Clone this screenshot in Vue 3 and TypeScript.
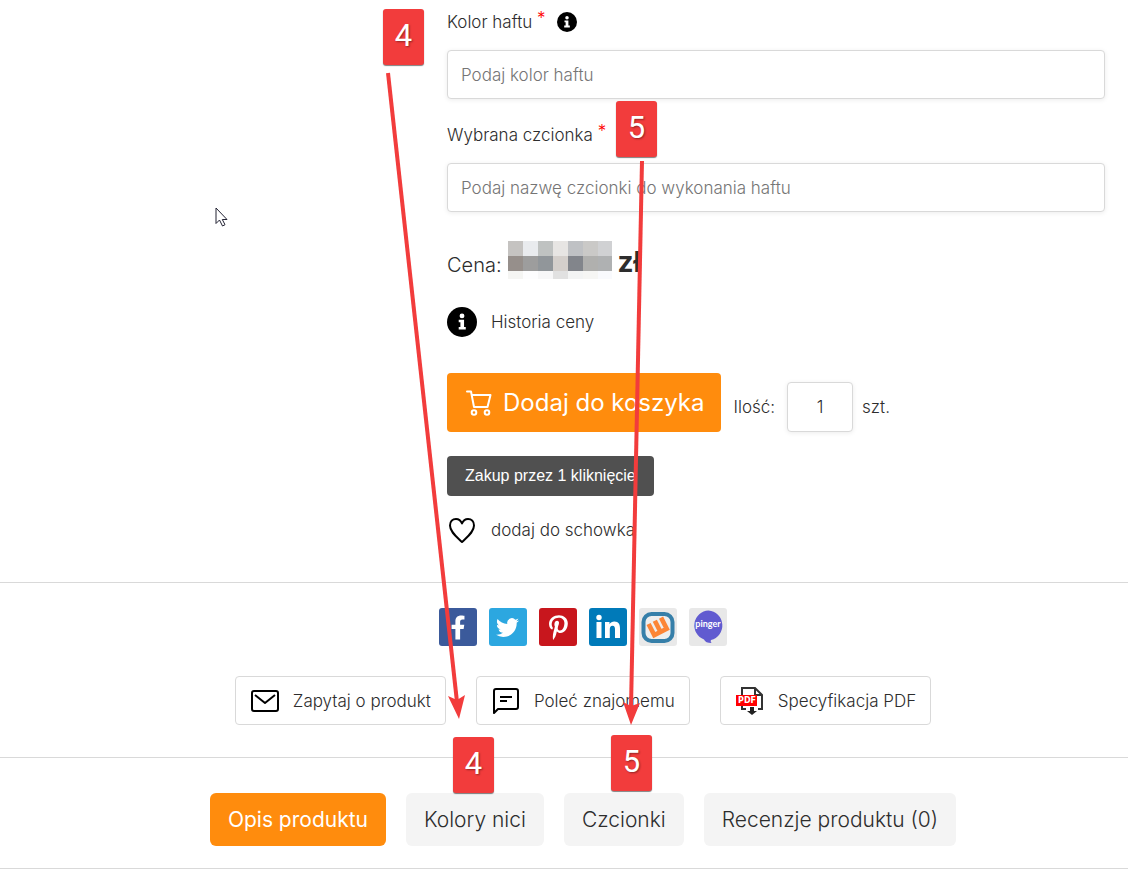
<script setup lang="ts">
import { ref } from 'vue'

const threadColor = ref('')
const fontName = ref('')
const quantity = ref('1')
const activeTab = ref(0)
const tabs: string[] = ['Opis produktu', 'Kolory nici', 'Czcionki', 'Recenzje produktu (0)']

const priceBlocks: string[] = [
  '#c5c3c1', '#e9ebee', '#bfc2c1', '#e7e5e3', '#bfc1c4', '#cac9c7', '#d0d1d3',
  '#968f8b', '#9d9d9d', '#91969a', '#d4cfcb', '#82858b', '#b0b0ae', '#afb1b2',
  '#f5f5f3', '#fdfdfe', '#f7f7f8', '#e1e1e1', '#f3f4f4', '#f6f6f4', '#f9fafd',
]
</script>

<template>
  <main class="page">
    <section class="product">
      <form class="form" @submit.prevent>
        <div class="field">
          <div class="label-row">
            <label for="thread">Kolor haftu <span class="req">*</span></label>
            <svg class="info-small" viewBox="0 0 32 32" aria-hidden="true">
              <circle cx="16" cy="16" r="16" fill="#000" />
              <circle cx="16" cy="9" r="2.8" fill="#fff" />
              <path d="M12 13.5h6.2v8.2h2.3v3h-9v-3h2.300v-5.200H12z" fill="#fff" />
            </svg>
          </div>
          <input id="thread" v-model="threadColor" class="text-input" type="text" placeholder="Podaj kolor haftu" />
        </div>
        <div class="field">
          <div class="label-row">
            <label for="font">Wybrana czcionka <span class="req">*</span></label>
          </div>
          <input id="font" v-model="fontName" class="text-input" type="text" placeholder="Podaj nazwę czcionki do wykonania haftu" />
        </div>

        <div class="price">
          <span>Cena:</span>
          <span class="mosaic">
            <i v-for="(c, i) in priceBlocks" :key="i" :style="{ background: c }"></i>
          </span>
          <strong>zł</strong>
        </div>

        <a class="link-row history" href="#history">
          <svg class="info-big" viewBox="0 0 32 32" aria-hidden="true">
            <circle cx="16" cy="16" r="16" fill="#000" />
            <circle cx="16" cy="9.5" r="2.6" fill="#fff" />
            <path d="M12.500 13.500h5.700v7.700H20v2.800h-7.500v-2.800h1.800v-4.900h-1.800z" fill="#fff" />
          </svg>
          <span>Historia ceny</span>
        </a>

        <div class="buy-row">
          <button class="buy" type="submit">
            <svg viewBox="0 0 26 26" fill="none" stroke="#fff" stroke-width="2" stroke-linejoin="round" stroke-linecap="round" aria-hidden="true">
              <path d="M1 1.500h4l3 15.500h13.500l3-12H6" />
              <circle cx="8" cy="22.500" r="2.300" />
              <circle cx="21" cy="22.500" r="2.300" />
            </svg>
            <span>Dodaj do koszyka</span>
          </button>
          <label for="qty">Ilość:</label>
          <input id="qty" v-model="quantity" class="qty" type="text" />
          <span>szt.</span>
        </div>

        <button class="one-click" type="button">Zakup przez 1 kliknięcie</button>

        <a class="link-row wish" href="#wishlist">
          <svg class="heart" viewBox="0 0 30 30" fill="none" stroke="#000" stroke-width="2" stroke-linejoin="round" aria-hidden="true">
            <path d="M15 27C10 22 3 17 3 10.500C3 6.500 5.500 4 9 4c3 0 5 2 6 4.500C16 6 18 4 21 4c3.500 0 6 2.500 6 6.500C27 17 20 22 15 27z" />
          </svg>
          <span>dodaj do schowka</span>
        </a>
      </form>
    </section>

    <section class="share">
      <div class="socials">
        <a href="#facebook" aria-label="Facebook">
          <svg viewBox="0 0 38 38"><rect width="38" height="38" rx="3" fill="#3b5a9b" />
            <path transform="translate(11.500 7.500) scale(.047)" fill="#fff" d="M279.140 288l14.220-92.660h-88.910v-60.130c0-25.350 12.420-50.060 52.240-50.060h40.420V6.260S260.430 0 225.360 0c-73.220 0-121.080 44.380-121.080 124.720v70.620H22.890V288h81.390v224h100.170V288z" />
          </svg>
        </a>
        <a href="#twitter" aria-label="Twitter">
          <svg viewBox="0 0 38 38"><rect width="38" height="38" rx="3" fill="#2ca7e0" />
            <path transform="translate(7 8) scale(.96)" fill="#fff" d="M23.953 4.570a10 10 0 01-2.825.775 4.958 4.958 0 002.163-2.723c-.951.555-2.005.959-3.127 1.184a4.920 4.920 0 00-8.384 4.482C7.690 8.095 4.067 6.130 1.640 3.162a4.822 4.822 0 00-.666 2.475c0 1.710.870 3.213 2.188 4.096a4.904 4.904 0 01-2.228-.616v.060a4.923 4.923 0 003.946 4.827 4.996 4.996 0 01-2.212.085 4.936 4.936 0 004.604 3.417 9.867 9.867 0 01-6.102 2.105c-.390 0-.779-.023-1.170-.067a13.995 13.995 0 007.557 2.209c9.053 0 13.998-7.496 13.998-13.985 0-.210 0-.420-.015-.630A9.935 9.935 0 0024 4.590z" />
          </svg>
        </a>
        <a href="#pinterest" aria-label="Pinterest">
          <svg viewBox="0 0 38 38"><rect width="38" height="38" rx="3" fill="#c8161d" />
            <path transform="translate(10 7) scale(.049)" fill="#fff" d="M204 6.500C101.400 6.500 0 74.900 0 185.600 0 256 39.600 296 63.600 296c9.900 0 15.600-27.600 15.600-35.400 0-9.300-23.700-29.100-23.700-67.800 0-80.400 61.200-137.400 140.400-137.400 68.100 0 118.500 38.700 118.500 109.800 0 53.100-21.300 152.700-90.300 152.700-24.900 0-46.200-18-46.200-43.800 0-37.800 26.400-74.400 26.400-113.400 0-66.200-93.900-54.200-93.900 25.800 0 16.800 2.100 35.400 9.600 50.700-13.800 59.400-42 147.900-42 209.100 0 18.900 2.700 37.500 4.500 56.400 3.400 3.800 1.700 3.400 6.900 1.500 50.400-69 48.600-82.500 71.400-172.800 12.300 23.400 44.100 36 69.300 36 106.200 0 153.900-103.500 153.900-196.800C384 71.300 298.200 6.500 204 6.500z" />
          </svg>
        </a>
        <a href="#linkedin" aria-label="LinkedIn">
          <svg viewBox="0 0 38 38"><rect width="38" height="38" rx="3" fill="#007ab9" />
            <g fill="#fff"><circle cx="10" cy="9.500" r="2.700" /><rect x="7.500" y="14" width="5" height="16" />
              <path d="M16 14h4.500v2.200c1-1.700 2.700-2.600 4.800-2.600 4.500 0 5.700 2.900 5.700 7.100V30h-5v-8.300c0-2-.200-4-2.500-4s-2.700 1.900-2.700 4V30H16z" /></g>
          </svg>
        </a>
        <a href="#wykop" aria-label="Wykop">
          <svg viewBox="0 0 38 38"><rect width="38" height="38" rx="3" fill="#e9e9e9" />
            <rect x="4.500" y="6" width="29" height="27" rx="8" fill="#eee" stroke="#367fa9" stroke-width="4" />
            <path transform="rotate(-27 19 19)" d="M12 12v12.500h14V12M19 12v12" fill="none" stroke="#fc8536" stroke-width="4.600" />
          </svg>
        </a>
        <a href="#pinger" aria-label="Pinger">
          <svg viewBox="0 0 38 38"><rect width="38" height="38" rx="3" fill="#e8e8e8" />
            <path d="M19.500 2.500a15 15 0 0 1 2.500 29.500q-1 1 .5 3-6 0-7.500-3.500A15 15 0 0 1 19.500 2.500z" fill="#615bd0" />
            <text x="19" y="19" text-anchor="middle" class="pinger">pinger</text>
          </svg>
        </a>
      </div>
      <div class="actions">
        <button type="button">
          <svg viewBox="0 0 30 30" fill="none" stroke="#000" stroke-width="2" stroke-linejoin="round" aria-hidden="true">
            <rect x="2" y="5" width="26" height="20" rx="2" /><path d="M5 9l10 8 10-8" />
          </svg>
          <span>Zapytaj o produkt</span>
        </button>
        <button type="button">
          <svg viewBox="0 0 30 30" fill="none" stroke="#000" stroke-width="2" stroke-linejoin="round" aria-hidden="true">
            <path d="M3 27V5q0-2 2-2h20q2 0 2 2v16q0 2-2 2H7zM9 11h12M9 15h7" />
          </svg>
          <span>Poleć znajomemu</span>
        </button>
        <button type="button">
          <svg viewBox="0 0 30 30" aria-hidden="true">
            <path d="M7 9V2h13l7 7v14h-4M20 2v7h7M7 19v4h4" fill="none" stroke="#333" stroke-width="2" />
            <rect x="1" y="9" width="21" height="11" fill="#f00" />
            <path d="M15 21h4v4h3l-5 4-5-4h3z" fill="#222" />
            <text x="12" y="17" text-anchor="middle" class="pdf">PDF</text>
          </svg>
          <span>Specyfikacja PDF</span>
        </button>
      </div>
    </section>

    <nav class="tabs">
      <button v-for="(t, i) in tabs" :key="t" type="button" :class="{ active: i === activeTab }" @click="activeTab = i">{{ t }}</button>
    </nav>

    <!-- Numbered guide arrows laid over the page -->
    <svg class="arrows" width="1128" height="870" aria-hidden="true">
      <g stroke="#f23c3c" stroke-width="4"><path d="M388 73L457 702" /><path d="M642 161L631 708" /></g>
      <g fill="#f23c3c"><path d="M448 696l9 4 8-5-6 24z" /><path d="M623 702l8 4 9-3-9 22z" /></g>
    </svg>
    <span class="badge four-top">4</span>
    <span class="badge five-top">5</span>
    <span class="badge four-bottom">4</span>
    <span class="badge five-bottom">5</span>
    <svg class="cursor" viewBox="0 0 14 20" aria-hidden="true">
      <path d="M1 1v15.500l3.500-3.500 3 6 2.500-1.300-2.700-5.200H12z" fill="#fff" stroke="#223" stroke-width="1" />
    </svg>
  </main>
</template>

<style>
body {
  margin: 0;
  background: #fff;
}
</style>

<style scoped>
.page {
  position: relative;
  overflow: hidden;
  font-family: Inter, "Noto Sans", sans-serif;
  font-weight: 300;
  font-size: 17px;
  line-height: 24px;
  color: #2d2d2d;
}
button, input {
  font: inherit;
  color: inherit;
  box-sizing: border-box;
}
button {
  border: 0;
  padding: 0;
  cursor: pointer;
  white-space: nowrap;
}
svg {
  display: block;
  flex: none;
}
a {
  color: inherit;
  text-decoration: none;
}
.product {
  display: grid;
  grid-template-columns: 447fr 658fr;
  padding: 0 23px 37px 0;
}
.form {
  grid-column: 2;
  min-width: 0;
}
.field + .field {
  margin-top: 14px;
}
.label-row {
  display: flex;
  align-items: center;
  gap: 11px;
  height: 50px;
  box-sizing: border-box;
  padding-bottom: 6px;
}
.req {
  color: #f00;
  vertical-align: 4px;
  line-height: 16px;
}
.info-small {
  width: 20px;
  height: 20px;
}
.text-input, .qty {
  border: 1px solid #d9d9d9;
  border-radius: 4px;
  background: #fff;
  box-shadow: 0 1px 5px rgba(0, 0, 0, 0.08);
}
.text-input {
  display: block;
  width: 100%;
  height: 49px;
  padding: 0 13px;
}
.text-input::placeholder {
  color: #757575;
  opacity: 1;
}
.price {
  display: flex;
  margin-top: 29px;
  height: 38px;
  font-size: 20px;
  line-height: 48px;
}
.price strong {
  font-size: 28px;
  line-height: 43px;
  font-weight: 700;
  margin-left: 6px;
}
.mosaic {
  display: grid;
  grid-template-columns: repeat(6, 15px) 14px;
  grid-template-rows: 15px 15px 8px;
  margin-left: 6px;
}
.link-row {
  display: flex;
  align-items: center;
  gap: 14px;
  width: max-content;
}
.history {
  margin-top: 28px;
}
.info-big, .heart {
  width: 30px;
  height: 30px;
}
.buy-row {
  display: flex;
  align-items: flex-end;
  line-height: 50px;
  margin-top: 36px;
}
.buy {
  display: flex;
  align-items: center;
  gap: 11px;
  height: 59px;
  padding: 0 17px 0 19px;
  background: #ff8c0d;
  border-radius: 4px;
  color: #fff;
  font-size: 24px;
  font-weight: 400;
  margin-right: 12px;
}
.buy svg {
  width: 26px;
  height: 26px;
}
.qty {
  width: 66px;
  height: 50px;
  text-align: center;
  margin: 0 9px 0 12px;
}
.one-click {
  display: block;
  margin-top: 24px;
  padding: 0 18px;
  height: 40px;
  background: #505050;
  color: #fff;
  border-radius: 4px;
  font-family: "Liberation Sans", Arial, sans-serif;
  font-weight: 400;
  font-size: 16px;
}
.wish {
  margin-top: 19px;
}
.share {
  border-top: 1px solid #d9d9d9;
  padding: 25px 0 32px 38px;
}
.socials {
  display: flex;
  justify-content: center;
  gap: 12px;
}
.socials svg {
  width: 38px;
  height: 38px;
}
.pinger {
  font: 700 9px Lato, sans-serif;
  fill: #fff;
}
.pdf {
  font: 700 8px "DejaVu Sans", sans-serif;
  fill: #fff;
}
.actions {
  display: flex;
  justify-content: center;
  gap: 30px;
  margin-top: 30px;
}
.actions button {
  display: flex;
  align-items: center;
  gap: 13px;
  height: 49px;
  padding: 0 14px;
  border: 1px solid #d9d9d9;
  border-radius: 4px;
  background: #fff;
}
.actions svg {
  width: 30px;
  height: 30px;
}
.tabs {
  display: flex;
  justify-content: center;
  gap: 20px;
  padding: 35px 0 22px 38px;
  border-top: 1px solid #d9d9d9;
  border-bottom: 1px solid #d9d9d9;
}
.tabs button {
  height: 53px;
  padding: 0 18px;
  border-radius: 6px;
  background: #f4f4f4;
  font-size: 21px;
}
.tabs .active {
  background: #ff8c0d;
  color: #fff;
  font-weight: 400;
}
.arrows {
  position: absolute;
  left: 0;
  top: 0;
  pointer-events: none;
}
.badge {
  position: absolute;
  width: 41px;
  height: 56px;
  border-radius: 3px;
  background: #f23c3c;
  box-shadow: 0 1px 1px rgba(0, 0, 0, 0.5);
  color: #fff;
  font: 400 31px/54px Roboto, sans-serif;
  text-align: center;
  text-shadow: 1px 1px 2px rgba(0, 0, 0, 0.4);
}
.four-top {
  left: 383px;
  top: 9px;
}
.five-top {
  left: 616px;
  top: 101px;
}
.four-bottom {
  left: 453px;
  top: 737px;
}
.five-bottom {
  left: 611px;
  top: 735px;
}
.cursor {
  position: absolute;
  left: 215px;
  top: 207px;
  width: 14px;
  height: 20px;
}
</style>
